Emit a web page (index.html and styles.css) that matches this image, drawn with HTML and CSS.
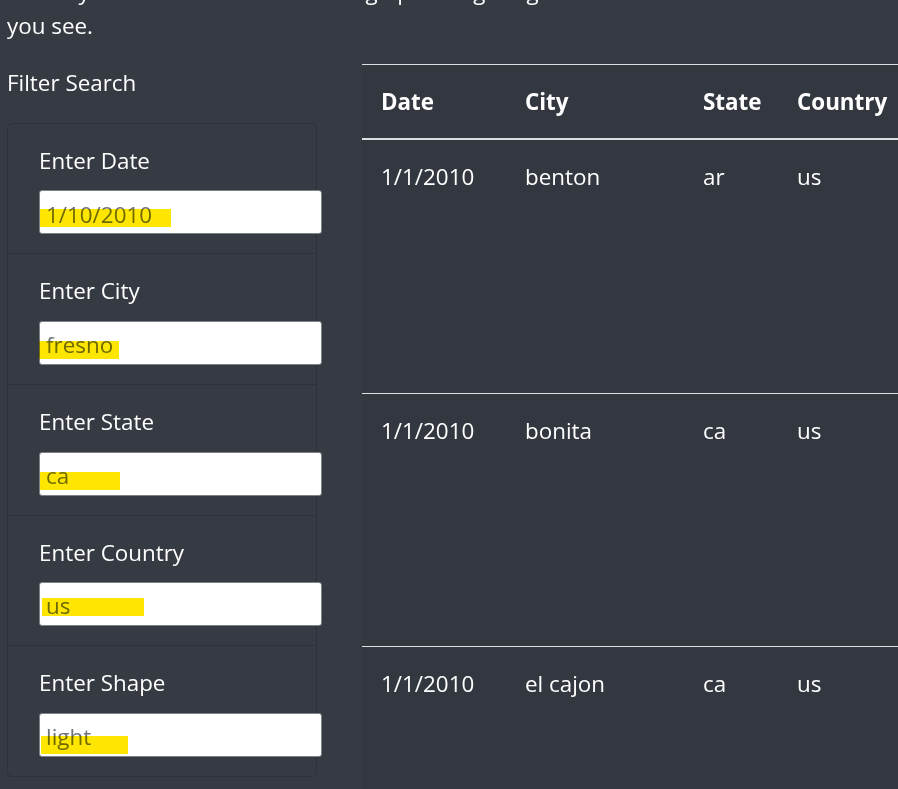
FILE: index.html
```html
<!DOCTYPE html>
<html lang="en">
<head>
<meta charset="utf-8">
<title>UFO Sightings</title>
<link rel="stylesheet" href="styles.css">
</head>
<body>
<p class="intro"><span class="intro-line">Use any of the filters below to bring up the sightings that match the data</span> you see.</p>
<div class="layout">
  <aside class="filters">
    <h2 class="filter-title">Filter Search</h2>
    <ul class="card">
      <li class="item">
        <label class="label">Enter Date</label>
        <div class="field"><span class="value">1/10/2010</span><span class="mark mark-date"></span></div>
      </li>
      <li class="item">
        <label class="label">Enter City</label>
        <div class="field"><span class="value">fresno</span><span class="mark mark-city"></span></div>
      </li>
      <li class="item">
        <label class="label">Enter State</label>
        <div class="field"><span class="value">ca</span><span class="mark mark-state"></span></div>
      </li>
      <li class="item">
        <label class="label">Enter Country</label>
        <div class="field"><span class="value">us</span><span class="mark mark-country"></span></div>
      </li>
      <li class="item">
        <label class="label">Enter Shape</label>
        <div class="field"><span class="value">light</span><span class="mark mark-shape"></span></div>
      </li>
    </ul>
  </aside>
  <div class="results">
    <table class="table">
      <colgroup>
        <col class="c-date"><col class="c-city"><col class="c-state"><col class="c-country"><col class="c-shape"><col class="c-dur"><col class="c-comm">
      </colgroup>
      <thead>
        <tr><th>Date</th><th>City</th><th>State</th><th>Country</th><th>Shape</th><th>Duration</th><th>Comments</th></tr>
      </thead>
      <tbody>
        <tr class="row-first"><td>1/1/2010</td><td>benton</td><td>ar</td><td>us</td><td>light</td><td>1 minute</td><td>Bright light moving slowly across the night sky</td></tr>
        <tr><td>1/1/2010</td><td>bonita</td><td>ca</td><td>us</td><td>light</td><td>5 minutes</td><td>Orange lights hovering over the hills</td></tr>
        <tr><td>1/1/2010</td><td>el cajon</td><td>ca</td><td>us</td><td>light</td><td>3 minutes</td><td>Several lights seen above the city</td></tr>
      </tbody>
    </table>
  </div>
</div>
</body>
</html>
```
FILE: styles.css
```css
html, body {
  margin: 0;
  padding: 0;
  overflow: hidden;
  background: #363a42;
  color: #ffffff;
  font-family: "Open Sans", "Noto Sans", sans-serif;
  font-size: 22.4px;
  line-height: 1.5;
}

.intro {
  margin: -25px 0 22px 7px;
  width: 885px;
}

.intro-line {
  display: block;
  white-space: nowrap;
}

.layout {
  display: grid;
  grid-template-columns: 310px 1fr;
  column-gap: 45px;
  padding-left: 7px;
}

.filter-title {
  margin: 2px 0 23px 0;
  font-size: 22.4px;
  font-weight: 400;
}

.card {
  list-style: none;
  margin: 0;
  padding: 0;
  border: 1px solid rgba(0, 0, 0, 0.14);
  border-radius: 5px;
}

.item {
  padding: 20px 0 19px 31px;
  border-top: 1px solid rgba(0, 0, 0, 0.14);
}

.item:first-child {
  border-top: none;
}

.label {
  display: block;
  margin-bottom: 13px;
}

.field {
  position: relative;
  height: 42px;
  background: #ffffff;
  border: 1px solid #7d8085;
  border-radius: 3px;
  padding: 0 0 0 6px;
  box-sizing: content-box;
  width: 275px;
  display: flex;
  align-items: center;
  color: #6f757c;
}

.value {
  position: relative;
  top: 2px;
}

.mark {
  position: absolute;
  background: #ffe600;
  mix-blend-mode: multiply;
  height: 18px;
}

.mark-date { left: 0; top: 18px; width: 131px; }
.mark-city { left: -1px; top: 19px; width: 80px; }
.mark-state { left: 0; top: 19px; width: 80px; }
.mark-country { left: 2px; top: 15px; width: 102px; }
.mark-shape { left: 1px; top: 22px; width: 87px; }

.results {
  min-width: 0;
}

.table {
  border-collapse: collapse;
  table-layout: fixed;
  width: 1100px;
  background: #33373f;
  color: #ffffff;
}

.c-date { width: 144px; }
.c-city { width: 178px; }
.c-state { width: 94px; }
.c-country { width: 130px; }
.c-shape { width: 120px; }
.c-dur { width: 150px; }
.c-comm { width: 284px; }

.table th,
.table td {
  text-align: left;
  vertical-align: top;
  padding: 20px 19px 19px 19px;
  border-top: 1px solid #dcdfe2;
}

.table th {
  font-weight: 700;
  border-bottom: 2px solid #dcdfe2;
}

.table tbody tr {
  height: 253px;
}

.table tbody .row-first {
  height: 255px;
}
```
